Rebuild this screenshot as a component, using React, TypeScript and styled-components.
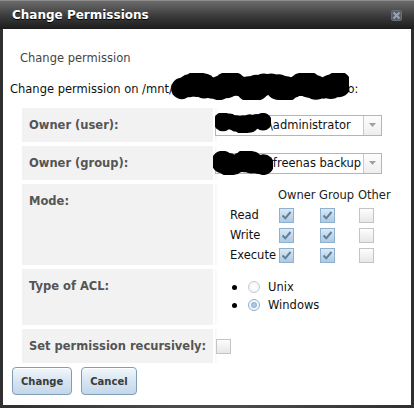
import React from "react";
import styled, { createGlobalStyle } from "styled-components";

const Global = createGlobalStyle`
  html, body { margin: 0; padding: 0; background: #3f3f3f; }
  * { box-sizing: border-box; }
`;

const Window = styled.div`
  width: 414px;
  height: 408px;
  display: flex;
  flex-direction: column;
  background: linear-gradient(90deg, #2f2f2f, #4a4a4a 40%, #4a4a4a 60%, #2f2f2f);
  font-family: "DejaVu Sans", Verdana, sans-serif;
`;

const TitleBar = styled.div`
  height: 29px;
  flex: none;
  display: flex;
  align-items: center;
  justify-content: space-between;
  padding: 0 12px 0 12px;
  border-top: 1px solid #8c8c8c;
  background: linear-gradient(#6c6c6c, #3a3a3a 55%, #1c1c1c);
`;

const Title = styled.div`
  color: #ffffff;
  font-weight: bold;
  font-size: 12px;
  text-shadow: 0 1px 0 #000;
`;

const Body = styled.div`
  flex: 1;
  margin: 0 3px 3px;
  background: #ffffff;
  display: flex;
  flex-direction: column;
  font-size: 11.5px;
  line-height: 13px;
  color: #000;
`;

const Heading = styled.div`
  margin: 23px 0 0 17px;
  color: #444;
`;

const PathLine = styled.div`
  margin: 17px 0 0 7px;
  color: #111;
  white-space: nowrap;
`;

const RedactBox = styled.span<{ $w: number }>`
  position: relative;
  display: inline-block;
  width: ${(p) => p.$w}px;
  height: 11px;
  vertical-align: baseline;
`;

const BlobSvg = styled.svg<{ $top: number; $left: number }>`
  position: absolute;
  top: ${(p) => p.$top}px;
  left: ${(p) => p.$left}px;
  z-index: 2;
`;

const FormGrid = styled.div`
  margin: 12px 16px 0 19px;
  display: grid;
  grid-template-columns: 191px 1fr;
  grid-template-rows: 34px 34px 81px 56px 34px;
  column-gap: 2px;
  row-gap: 4px;
`;

const LabelCell = styled.div`
  background: #f2f2f2;
  padding: 11px 4px 0 7px;
  font-weight: bold;
  color: #555;
  white-space: nowrap;
`;

const ValueCell = styled.div<{ $align?: string }>`
  display: flex;
  align-items: ${(p) => p.$align || "center"};
  background: linear-gradient(90deg, #f6f6f6 0px, #ffffff 3px);
`;

const Select = styled.div`
  display: flex;
  width: 167px;
  height: 21px;
  border: 1px solid #b5b5b5;
  background: #fff;
`;

const SelectText = styled.div`
  flex: 1;
  padding-left: 2px;
  display: flex;
  align-items: center;
  color: #111;
  white-space: nowrap;
  overflow: visible;
`;

const SelectArrow = styled.div`
  width: 18px;
  border-left: 1px solid #c8c8c8;
  display: flex;
  align-items: center;
  justify-content: center;
  background: linear-gradient(#fdfdfd, #eeeeee);
`;

const ModeTable = styled.div`
  margin: 1px 0 0 15px;
  display: grid;
  grid-template-columns: 48px 41px 39px auto;
  grid-auto-rows: 20px;
  align-items: center;
  color: #111;
`;

const ColHead = styled.div`
  color: #222;
`;

const Box = styled.span<{ $checked?: boolean }>`
  display: inline-flex;
  align-items: center;
  justify-content: center;
  width: 15px;
  height: 15px;
  margin-left: 1px;
  vertical-align: middle;
  border: 1px solid ${(p) => (p.$checked ? "#8fb1cf" : "#c4c4c4")};
  background: ${(p) =>
    p.$checked
      ? "linear-gradient(#dbe8f3, #adc9e1)"
      : "linear-gradient(#fdfdfd, #e7e7e7)"};
`;

const AclList = styled.ul`
  list-style: none;
  margin: 0;
  padding: 9px 0 0 17px;
`;

const AclItem = styled.li`
  display: flex;
  align-items: center;
  height: 18px;
  color: #111;
`;

const Bullet = styled.span`
  width: 5px;
  height: 5px;
  border-radius: 50%;
  background: #000;
  margin-right: 11px;
`;

const Radio = styled.span<{ $on?: boolean }>`
  width: 12px;
  height: 12px;
  border-radius: 50%;
  margin-right: 8px;
  border: 1px solid ${(p) => (p.$on ? "#8fb0cc" : "#c3ccd6")};
  background: radial-gradient(circle, #ffffff 0%, #eef2f6 100%);
  display: flex;
  align-items: center;
  justify-content: center;
  &::after {
    content: "";
    width: 6px;
    height: 6px;
    border-radius: 50%;
    background: ${(p) => (p.$on ? "radial-gradient(circle, #b9d2e8, #7ea6c9)" : "transparent")};
  }
`;

const ButtonRow = styled.div`
  display: flex;
  gap: 9px;
  margin: 4px 0 0 9px;
`;

const Button = styled.button`
  height: 28px;
  padding: 0 8px;
  border: 1px solid #7e9db6;
  border-radius: 4px;
  background: linear-gradient(#f2f7fb, #d7e5f1 50%, #c3d7e9);
  box-shadow: inset 0 1px 0 #ffffff;
  font-family: "DejaVu Sans", Verdana, sans-serif;
  font-weight: bold;
  font-size: 10px;
  color: #3a3a3a;
`;

function Blob({ w, h, top, left, seed }: { w: number; h: number; top: number; left: number; seed: number }) {
  const items: React.ReactNode[] = [];
  const n = Math.max(4, Math.round(w / 8));
  const r0 = h / 2;
  for (let i = 0; i < n; i++) {
    const cx = r0 * 0.8 + (i * (w - r0 * 1.6)) / (n - 1);
    const wob = Math.sin(i * 2.3 + seed);
    const wob2 = Math.cos(i * 1.3 + seed * 2);
    const r = r0 * (0.72 + 0.25 * Math.abs(wob));
    items.push(
      <circle key={i} cx={cx} cy={r0 + wob2 * r0 * 0.18} r={Math.min(r, r0 - 0.5)} fill="#000" />
    );
  }
  return (
    <BlobSvg $top={top} $left={left} width={w} height={h} viewBox={`0 0 ${w} ${h}`}>
      {items}
    </BlobSvg>
  );
}

function Check({ on }: { on?: boolean }) {
  return (
    <Box $checked={on}>
      {on && (
        <svg width="11" height="11" viewBox="0 0 11 11">
          <path d="M1.5 5.5 L4.3 8.3 L9.5 2" stroke="#5f7f9d" strokeWidth="2" fill="none" />
        </svg>
      )}
    </Box>
  );
}

function CloseIcon() {
  return (
    <svg width="11" height="11" viewBox="0 0 11 11">
      <rect x="0.5" y="0.5" width="10" height="10" rx="1.5" fill="#555e69" stroke="#646d79" />
      <path d="M2.5 2.5 L8.5 8.5 M8.5 2.5 L2.5 8.5" stroke="#9aa5b2" strokeWidth="2" />
    </svg>
  );
}

function Arrow() {
  return (
    <svg width="7" height="4" viewBox="0 0 7 4">
      <path d="M0 0 L7 0 L3.5 4 Z" fill="#a0a0a0" />
    </svg>
  );
}

const perms = [
  { name: "Read", v: [true, true, false] },
  { name: "Write", v: [true, true, false] },
  { name: "Execute", v: [true, true, false] },
];

export default function App() {
  return (
    <>
      <Global />
      <Window>
        <TitleBar>
          <Title>Change Permissions</Title>
          <CloseIcon />
        </TitleBar>
        <Body>
          <Heading>Change permission</Heading>
          <PathLine>
            Change permission on /mnt/
            <RedactBox $w={170}>
              <Blob w={178} h={27} top={-9} left={-2} seed={0.3} />
            </RedactBox>
            to:
          </PathLine>
          <FormGrid>
            <LabelCell>Owner (user):</LabelCell>
            <ValueCell>
              <Select>
                <SelectText>
                  <RedactBox $w={51}>
                    <Blob w={56} h={20} top={-7} left={-3} seed={1.2} />
                  </RedactBox>
                  \administrator
                </SelectText>
                <SelectArrow>
                  <Arrow />
                </SelectArrow>
              </Select>
            </ValueCell>

            <LabelCell>Owner (group):</LabelCell>
            <ValueCell>
              <Select>
                <SelectText>
                  <RedactBox $w={51}>
                    <Blob w={60} h={24} top={-7} left={-5} seed={2.1} />
                  </RedactBox>
                  \freenas backup
                </SelectText>
                <SelectArrow>
                  <Arrow />
                </SelectArrow>
              </Select>
            </ValueCell>

            <LabelCell>Mode:</LabelCell>
            <ValueCell $align="flex-start">
              <ModeTable>
                <span />
                <ColHead>Owner</ColHead>
                <ColHead>Group</ColHead>
                <ColHead>Other</ColHead>
                {perms.map((p) => (
                  <React.Fragment key={p.name}>
                    <span>{p.name}</span>
                    {p.v.map((on, i) => (
                      <span key={i}>
                        <Check on={on} />
                      </span>
                    ))}
                  </React.Fragment>
                ))}
              </ModeTable>
            </ValueCell>

            <LabelCell>Type of ACL:</LabelCell>
            <ValueCell $align="flex-start">
              <AclList>
                <AclItem>
                  <Bullet />
                  <Radio />
                  Unix
                </AclItem>
                <AclItem>
                  <Bullet />
                  <Radio $on />
                  Windows
                </AclItem>
              </AclList>
            </ValueCell>

            <LabelCell>Set permission recursively:</LabelCell>
            <ValueCell>
              <Check />
            </ValueCell>
          </FormGrid>
          <ButtonRow>
            <Button>Change</Button>
            <Button>Cancel</Button>
          </ButtonRow>
        </Body>
      </Window>
    </>
  );
}
